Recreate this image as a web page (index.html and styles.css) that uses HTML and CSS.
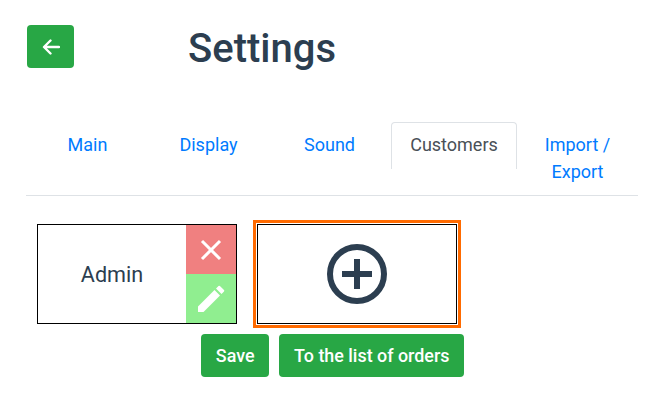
FILE: index.html
```html
<!DOCTYPE html>
<html lang="en">
<head>
    <meta charset="UTF-8">
    <meta name="viewport" content="width=device-width, initial-scale=1.0">
    <title>Settings</title>
    <link rel="stylesheet" href="styles.css">
</head>
<body>
    <div class="page">
        <div class="header">
            <a class="btn back-btn" href="#">
                <svg width="18" height="16" viewBox="0 0 18 16"><path d="M8.500 1.500 2 8l6.500 6.500M2.500 8H17" fill="none" stroke="#fff" stroke-width="2.400" stroke-linecap="round" stroke-linejoin="round"/></svg>
            </a>
            <h1 class="title">Settings</h1>
        </div>

        <ul class="tabs">
            <li class="tab"><a href="#">Main</a></li>
            <li class="tab"><a href="#">Display</a></li>
            <li class="tab"><a href="#">Sound</a></li>
            <li class="tab active"><a href="#">Customers</a></li>
            <li class="tab"><a href="#">Import / Export</a></li>
        </ul>

        <div class="customers">
            <div class="card">
                <div class="card-name">Admin</div>
                <div class="card-actions">
                    <button class="action delete">
                        <svg width="22" height="22" viewBox="0 0 22 22"><path d="M2 2l18 18M20 2 2 20" stroke="#fff" stroke-width="3"/></svg>
                    </button>
                    <button class="action edit">
                        <svg width="30" height="30" viewBox="0 0 30 30"><path d="M2 22.500 18.500 6l5.500 5.500L7.500 28H2zM20 4.500l2.500-2.500a1 1 0 0 1 1.400 0l4.100 4.100a1 1 0 0 1 0 1.400L25.500 10z" fill="#fff"/></svg>
                    </button>
                </div>
            </div>
            <button class="card add-card">
                <svg width="60" height="60" viewBox="0 0 60 60"><circle cx="30" cy="30" r="27" fill="none" stroke="#2c3e50" stroke-width="6"/><path d="M30 15v30M15 30h30" stroke="#2c3e50" stroke-width="6"/></svg>
            </button>
        </div>

        <div class="footer">
            <a class="btn" href="#">Save</a>
            <a class="btn" href="#">To the list of orders</a>
        </div>
    </div>
</body>
</html>
```

FILE: styles.css
```css
* {
    box-sizing: border-box;
}
body {
    margin: 0;
    background: #fff;
    font-family: Roboto, sans-serif;
    color: #2c3e50;
}
.page {
    width: 667px;
    height: 400px;
    padding: 25px 29px 0 26px;
    overflow: hidden;
}
.header {
    display: flex;
    align-items: flex-start;
}
.btn {
    display: inline-flex;
    align-items: center;
    justify-content: center;
    height: 43px;
    padding: 0 14.800px 1px;
    border-radius: 4px;
    background-color: #28a745;
    color: #fff;
    font-size: 17.900px;
    font-weight: 500;
    text-decoration: none;
}
.back-btn {
    width: 47px;
    margin-left: 1px;
    padding: 0;
}
.title {
    margin: 1px 0 0 114px;
    font-size: 40px;
    font-weight: 500;
    line-height: 46px;
}
.tabs {
    display: flex;
    margin: 50px 0 0;
    padding: 0 0 0 1px;
    height: 74px;
    list-style: none;
    border-bottom: 1px solid #dee2e6;
}
.tab {
    width: 121px;
    text-align: center;
    font-size: 18px;
    line-height: 27px;
}
.tab a {
    display: block;
    padding: 9px 16px;
    color: #007bff;
    text-decoration: none;
}
.tab.active {
    width: 126px;
    margin-left: 1px;
    height: 47px;
    border: 1px solid #dee2e6;
    border-bottom: none;
    border-radius: 4px 4px 0 0;
}
.tab.active a {
    padding: 8px 0;
    color: #495057;
}
.customers {
    display: flex;
    gap: 20px;
    margin: 28px 0 0 11px;
}
.card {
    display: flex;
    width: 200px;
    height: 100px;
    padding: 0;
    border: 1px solid #000;
    background: #fff;
}
.card-name {
    flex: 1;
    text-align: center;
    font-size: 21.600px;
    line-height: 100px;
}
.card-actions {
    display: flex;
    flex-direction: column;
    width: 50px;
}
.action {
    display: flex;
    flex: 1;
    align-items: center;
    justify-content: center;
    padding: 0;
    border: none;
}
.delete {
    background-color: #f08080;
}
.edit {
    background-color: #90ee90;
}
.add-card {
    align-items: center;
    justify-content: center;
    outline: 3px solid #ff6a00;
    outline-offset: 1px;
}
.footer {
    display: flex;
    gap: 10px;
    margin: 10px 0 0 175px;
}
```
